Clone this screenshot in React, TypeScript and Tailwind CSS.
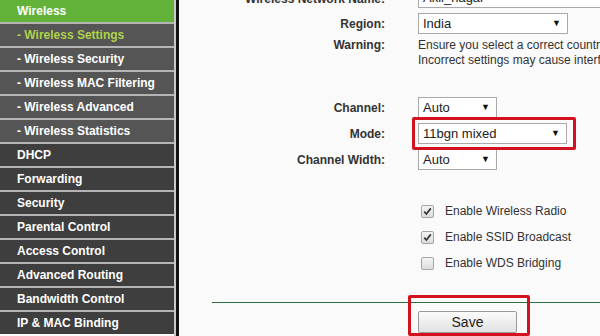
import React from "react"

const menu: { label: string; sub?: boolean; active?: boolean }[] = [
  { label: "- Wireless Settings", sub: true, active: true },
  { label: "- Wireless Security", sub: true },
  { label: "- Wireless MAC Filtering", sub: true },
  { label: "- Wireless Advanced", sub: true },
  { label: "- Wireless Statistics", sub: true },
  { label: "DHCP" },
  { label: "Forwarding" },
  { label: "Security" },
  { label: "Parental Control" },
  { label: "Access Control" },
  { label: "Advanced Routing" },
  { label: "Bandwidth Control" },
  { label: "IP & MAC Binding" },
]

const Select = ({ value, width }: { value: string; width: string }) => (
  <div
    className={`${width} h-[21px] bg-white border border-[#a9a9a9] flex items-center justify-between pl-[4px] pr-[6px] text-[13px] text-[#222]`}
  >
    <span>{value}</span>
    <span className="text-[9px] text-[#111]">▼</span>
  </div>
)

const Checkbox = ({ checked }: { checked?: boolean }) => (
  <div className="w-[13px] h-[13px] rounded-[2px] border border-[#a5a5a5] bg-gradient-to-b from-[#f4f4f4] to-[#dcdcdc] flex items-center justify-center">
    {checked && (
      <svg width="9" height="9" viewBox="0 0 9 9">
        <path d="M1.2 4.6 L3.4 7 L7.8 1.4" fill="none" stroke="#333" strokeWidth="1.7" />
      </svg>
    )}
  </div>
)

const Row = ({
  label,
  className,
  children,
}: {
  label: string
  className?: string
  children: React.ReactNode
}) => (
  <div className={`shrink-0 grid grid-cols-[206px_1fr] gap-x-[33px] items-center ${className ?? ""}`}>
    <p className="text-right font-bold text-[12px] text-[#333] pt-[1px]">{label}</p>
    <div>{children}</div>
  </div>
)

const CheckRow = ({ label, checked }: { label: string; checked?: boolean }) => (
  <div className="h-[26px] flex items-center gap-[11px] pl-[242px] text-[12px] text-[#333]">
    <Checkbox checked={checked} />
    <span>{label}</span>
  </div>
)

const App = () => {
  return (
    <div
      className="w-[600px] h-[336px] overflow-hidden flex bg-[#fafafa]"
      style={{ fontFamily: '"Liberation Sans", Arial, sans-serif' }}
    >
      <div className="w-[174px] shrink-0 flex flex-col">
        <div className="h-[22px] shrink-0 bg-[#62b23a] flex items-center pl-[17px] text-[12px] font-bold text-white">
          Wireless
        </div>
        {menu.map((item) => (
          <div key={item.label} className="shrink-0 pt-[2px] bg-[#b4b4b4]">
            <div
              className={`h-[22px] flex items-center pl-[17px] text-[12px] font-bold ${
                item.sub ? "bg-[#555555]" : "bg-[#3e3e3e]"
              } ${item.active ? "text-[#aed24a]" : "text-white"}`}
            >
              {item.label}
            </div>
          </div>
        ))}
      </div>
      <div className="w-[2px] shrink-0 bg-[#c9c9c9]" />
      <div className="w-[3px] shrink-0 bg-[#111]" />

      <div className="flex-1 flex flex-col min-w-0">
        <Row label="Wireless Network Name:" className="-mt-[14px] h-[24px]">
          <div className="w-[200px] h-[20px] bg-white border border-[#a9a9a9] flex items-center pl-[4px] text-[13px] text-[#222]">
            Akil_nagar
          </div>
        </Row>
        <Row label="Region:" className="mt-[3px] h-[21px]">
          <Select value="India" width="w-[150px]" />
        </Row>
        <div className="shrink-0 mt-[4px] grid grid-cols-[206px_1fr] gap-x-[33px] items-start">
          <p className="text-right font-bold text-[12px] leading-[15px] text-[#333]">Warning:</p>
          <p className="text-[12px] leading-[15px] text-[#333] whitespace-nowrap">
            Ensure you select a correct country to conform local law.
            <br />
            Incorrect settings may cause interference.
          </p>
        </div>
        <Row label="Channel:" className="mt-[29px] h-[21px]">
          <Select value="Auto" width="w-[79px]" />
        </Row>
        <Row label="Mode:" className="mt-[5px] h-[21px]">
          <div className="relative w-[149px]">
            <Select value="11bgn mixed" width="w-[149px]" />
            <div className="absolute -left-[6px] -top-[6px] -right-[9px] -bottom-[6px] border-[3px] border-[#d2121c] rounded-[2px]" />
          </div>
        </Row>
        <Row label="Channel Width:" className="mt-[5px] h-[21px]">
          <Select value="Auto" width="w-[79px]" />
        </Row>

        <div className="shrink-0 mt-[28px]">
          <CheckRow label="Enable Wireless Radio" checked />
          <CheckRow label="Enable SSID Broadcast" checked />
          <CheckRow label="Enable WDS Bridging" />
        </div>

        <div className="shrink-0 mt-[26px] ml-[33px] h-px bg-[#2f6e44]" />

        <div className="shrink-0 mt-[8px] pl-[239px]">
          <div className="relative w-[99px]">
            <div className="h-[22px] border border-[#9a9a9a] rounded-[2px] bg-gradient-to-b from-[#fbfbfb] to-[#e2e2e2] flex items-center justify-center text-[14px] text-[#222]">
              Save
            </div>
            <div className="absolute -left-[10px] -top-[16px] -right-[13px] -bottom-[3px] border-[3px] border-[#d2121c] rounded-[2px]" />
          </div>
        </div>
      </div>
    </div>
  )
}

export default App
